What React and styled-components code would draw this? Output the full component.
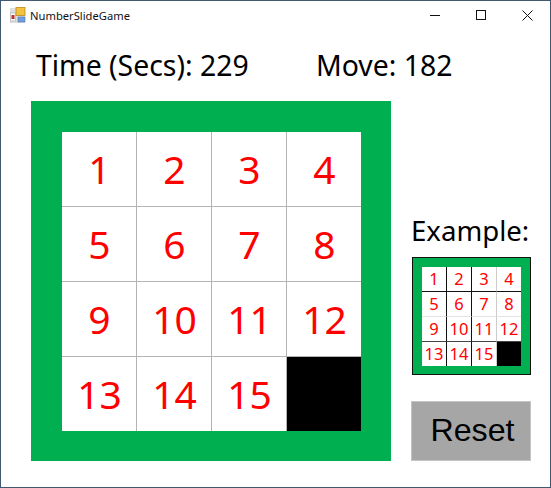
import React from "react";
import styled, { createGlobalStyle } from "styled-components";

const GlobalStyle = createGlobalStyle`
  html, body {
    margin: 0;
    padding: 0;
    background: #fff;
  }
`;

const Window = styled.div`
  box-sizing: border-box;
  width: 551px;
  height: 488px;
  background: #fff;
  border: 1px solid #40596e;
  font-family: "Noto Sans", "Open Sans", sans-serif;
  color: #000;
  overflow: hidden;
`;

const TitleBar = styled.div`
  display: flex;
  align-items: center;
  height: 28px;
  padding-left: 8px;
`;

const AppTitle = styled.span`
  margin-left: 3px;
  font-size: 11.2px;
  color: #111;
`;

const WindowButtons = styled.div`
  display: flex;
  margin-left: auto;
`;

const WindowButton = styled.div`
  display: flex;
  align-items: center;
  justify-content: center;
  width: 46px;
  height: 28px;
`;

const Stats = styled.div`
  display: flex;
  align-items: center;
  height: 40px;
  margin-top: 16px;
  padding-left: 35px;
  font-size: 28.4px;
`;

const TimeLabel = styled.div`
  width: 280px;
`;

const Main = styled.div`
  display: flex;
  align-items: flex-end;
  margin-top: 16px;
  padding-left: 30px;
`;

const Frame = styled.div`
  display: grid;
  grid-template-columns: ${(p) => `repeat(3, ${p.$cell}px) ${p.$cell - 1}px`};
  grid-template-rows: ${(p) => `repeat(3, ${p.$cell}px) ${p.$cell - 1}px`};
  background: #00b050;
  padding: ${(p) => `${p.$pad + 1}px ${p.$pad + (p.$outlined ? 1 : 0)}px ${p.$pad}px ${p.$pad + 1}px`};
  width: fit-content;
  border: ${(p) => (p.$outlined ? "1px solid #111" : "none")};
`;

const Tile = styled.div`
  box-sizing: border-box;
  display: flex;
  align-items: center;
  justify-content: center;
  padding-left: ${(p) => p.$shift}px;
  padding-bottom: ${(p) => p.$shift}px;
  background: ${(p) => (p.$empty ? "#000" : "#fff")};
  color: #f00;
  font-size: ${(p) => p.$size}px;
  line-height: 1;
  border-right: ${(p) => (p.$right ? `1px solid ${p.$right}` : "none")};
  border-bottom: ${(p) => (p.$bottom ? `1px solid ${p.$bottom}` : "none")};
`;

const Side = styled.div`
  display: flex;
  flex-direction: column;
  margin-left: 20px;
`;

const ExampleLabel = styled.div`
  font-size: 27.6px;
  line-height: 36px;
  margin-bottom: 9px;
`;

const ExampleBoard = styled.div`
  margin-left: 1px;
`;

const ResetButton = styled.button`
  width: 120px;
  height: 60px;
  margin-top: 26px;
  padding: 0 0 2px 3px;
  background: #a6a6a6;
  border: 1px solid #c4c4c4;
  font-family: "Liberation Sans", Arial, sans-serif;
  font-size: 32.2px;
  color: #000;
`;

const numbers = [1, 2, 3, 4, 5, 6, 7, 8, 9, 10, 11, 12, 13, 14, 15, null];

const AppIcon = () => (
  <svg width="18" height="18" viewBox="0 0 18 18">
    <rect x="1" y="2" width="15" height="15" fill="#dedede" />
    <rect x="1.5" y="7" width="5" height="8" fill="#fff" stroke="#999" strokeWidth="0.5" />
    <rect x="2.5" y="9" width="3" height="4" fill="#c0302a" />
    <rect x="7" y="1.5" width="9" height="8" fill="#f3c33f" stroke="#b98a1e" strokeWidth="0.8" />
    <rect x="9" y="11" width="7" height="5" fill="#6f9fdc" stroke="#4a78b5" strokeWidth="0.6" />
  </svg>
);

const Board = ({ cell, pad, fontSize, shift, columnLines, rowLines, outlined }) => (
  <Frame $cell={cell} $pad={pad} $outlined={outlined}>
    {numbers.map((n, i) => (
      <Tile
        key={i}
        $empty={n === null}
        $size={fontSize}
        $shift={shift}
        $right={columnLines[i % 4]}
        $bottom={rowLines[Math.floor(i / 4)]}
      >
        {n}
      </Tile>
    ))}
  </Frame>
);

const App = () => {
  return (
    <Window>
      <GlobalStyle />
      <TitleBar>
        <AppIcon />
        <AppTitle>NumberSlideGame</AppTitle>
        <WindowButtons>
          <WindowButton>
            <svg width="11" height="11" viewBox="0 0 11 11">
              <path d="M0 5.5H10" stroke="#111" fill="none" />
            </svg>
          </WindowButton>
          <WindowButton>
            <svg width="11" height="11" viewBox="0 0 11 11">
              <rect x="0.5" y="0.5" width="9" height="9" stroke="#111" fill="none" />
            </svg>
          </WindowButton>
          <WindowButton>
            <svg width="11" height="11" viewBox="0 0 11 11">
              <path d="M0.5 0.5L10.5 10.5M10.5 0.5L0.5 10.5" stroke="#111" fill="none" />
            </svg>
          </WindowButton>
        </WindowButtons>
      </TitleBar>
      <Stats>
        <TimeLabel>Time (Secs): 229</TimeLabel>
        <div>Move: 182</div>
      </Stats>
      <Main>
        <Board
          cell={75}
          pad={30}
          fontSize={39}
          shift={1}
          columnLines={["#b4b4b4", "#b4b4b4", "#b4b4b4", null]}
          rowLines={["#b4b4b4", "#b4b4b4", "#b4b4b4", null]}
        />
        <Side>
          <ExampleLabel>Example:</ExampleLabel>
          <ExampleBoard>
            <Board
              cell={25}
              pad={8}
              fontSize={16.5}
              shift={0}
              outlined
              columnLines={["#111", "#111", "#ccc", null]}
              rowLines={["#111", "#e4e4e4", "#444", null]}
            />
          </ExampleBoard>
          <ResetButton>Reset</ResetButton>
        </Side>
      </Main>
    </Window>
  );
};

export default App;
